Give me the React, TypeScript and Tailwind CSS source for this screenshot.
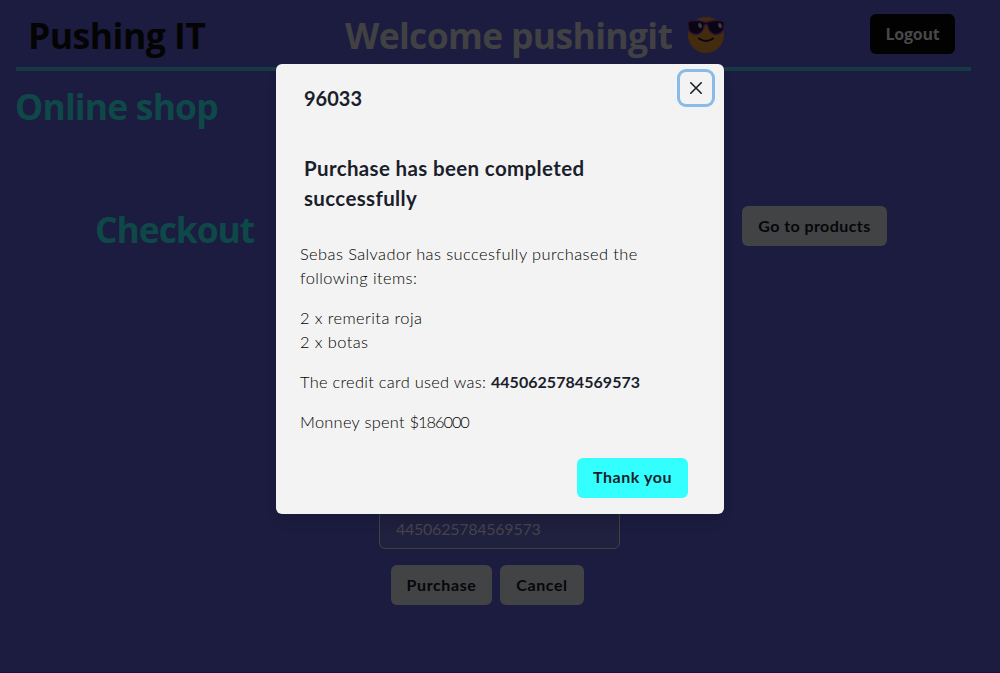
import type { ReactNode } from "react";

const heading = "font-['Open_Sans','Noto_Sans',sans-serif] text-[35.5px] font-bold leading-[54px] whitespace-nowrap";

function DimButton({ children, className }: { children: ReactNode; className: string }) {
  return (
    <button className={`flex h-10 shrink-0 items-center justify-center whitespace-nowrap rounded-md text-base font-bold ${className}`}>
      {children}
    </button>
  );
}

function Sunglasses() {
  return (
    <svg viewBox="0 0 38 38" className="h-[38px] w-[38px]" aria-hidden="true">
      <circle cx="19" cy="19" r="18" fill="#432c0d" />
      <path d="M1 5.5 Q10 3.5 17 6 Q19 7 21 6 Q28 3.5 37 5.5 L37 9 Q37 18 29 18.5 Q22 18 20.5 9 Q19 8 17.5 9 Q16 18 9 18.5 Q1 18 1 9 Z" fill="#0b0412" stroke="#281438" strokeWidth="1.4" />
      <ellipse cx="13" cy="9.5" rx="1.8" ry="2.6" fill="#3d3d40" transform="rotate(-20 13 9.5)" />
      <ellipse cx="33" cy="9.5" rx="1.8" ry="2.6" fill="#3d3d40" transform="rotate(-20 33 9.5)" />
      <path d="M12 22.5 Q19 27.5 26 22.5" fill="none" stroke="#0b0412" strokeWidth="2" strokeLinecap="round" />
    </svg>
  );
}

export default function App() {
  return (
    <div className="relative h-[673px] w-[1000px] overflow-hidden border-b border-[#1c0e3c] bg-[#1c1c40] font-['Lato',sans-serif] text-base text-[#070709]">
      <header className="ml-4 flex h-[71px] w-[955px] items-start border-b-4 border-[#153a46]">
        <div className={`ml-3 mt-2 w-[317px] text-[#040404] ${heading}`}>
          <span className="tracking-[-0.5px]">Pushing IT</span>
        </div>
        <div className={`mt-2 w-[342px] text-[#414143] ${heading}`}>
          <span className="tracking-[-0.67px]">Welcome pushingit</span>
        </div>
        <div className="mt-4 w-[183px]"><Sunglasses /></div>
        <DimButton className="mt-3.5 w-[85px] bg-[#020202] pb-px font-['Open_Sans',sans-serif] tracking-[-0.2px] text-[#484848]">Logout</DimButton>
      </header>
      <main>
        <h1 className={`ml-[15px] mt-2 text-[#0e4848] ${heading}`}><span className="tracking-[-0.85px]">Online shop</span></h1>
        <section className="ml-[95px] mt-[69px] flex h-[55px] w-[792px] items-start justify-between">
          <h2 className={`text-[#0e4848] ${heading}`}><span className="tracking-[-1.1px]">Checkout</span></h2>
          <DimButton className="mt-1 w-[145px] bg-[#414345] tracking-[0.42px]">Go to products</DimButton>
        </section>
        <form className="ml-[379px] mt-[252px] w-[241px]" onSubmit={(e) => e.preventDefault()}>
          <div className="flex h-10 items-center rounded-md border border-[#414141] bg-[#20203f] px-4 text-[#454548]">
            <span className="tracking-[-0.25px]">4450625784569573</span>
          </div>
          <div className="ml-3 mt-4 flex gap-2">
            <DimButton className="w-[101px] bg-[#414345] tracking-[0.6px]">Purchase</DimButton>
            <DimButton className="w-[84px] bg-[#414345] tracking-[0.6px]">Cancel</DimButton>
          </div>
        </form>
      </main>
      <div role="dialog" aria-modal="true" className="absolute left-[276px] top-16 flex h-[450px] w-[448px] flex-col rounded-md bg-[#f3f3f3] text-[#1b1e2b] shadow-[0_10px_15px_-3px_rgba(0,0,0,0.1),0_4px_6px_-2px_rgba(0,0,0,0.05)]">
        <div className="flex h-[89px] items-start justify-between pl-7 pr-3 pt-2">
          <h3 className="mt-[11px] text-xl font-bold leading-[30px]"><span>96033</span></h3>
          <button aria-label="Close" className="flex h-8 w-8 items-center justify-center rounded-md shadow-[0_0_0_3px_#88bce8]">
            <svg viewBox="0 0 12 12" className="h-3 w-3" fill="none" stroke="currentColor" strokeWidth="1.6" strokeLinecap="round">
              <path d="M.8 .8 11.2 11.2M11.2 .8 .8 11.2" />
            </svg>
          </button>
        </div>
        <h4 className="ml-7 text-[20.5px] font-bold leading-[30px] tracking-[0.36px]"><span>Purchase has been completed</span><br /><span>successfully</span></h4>
        <div className="ml-6 mt-[29px] flex flex-col gap-4 whitespace-nowrap text-[16.4px] font-light leading-6 tracking-[0.42px] text-[#000000]">
          <p><span>Sebas Salvador has succesfully purchased the</span><br /><span>following items:</span></p>
          <p><span>2 x remerita roja</span><br /><span>2 x botas</span></p>
          <p><span className="tracking-[0.28px]">The credit card used was: </span><b className="text-base font-bold tracking-[0.05px] text-[#1b1e2b]">4450625784569573</b></p>
          <p><span className="tracking-[0.28px]">Monney spent </span><span className="tracking-[-1.05px]">$186000</span></p>
        </div>
        <div className="mt-6 flex justify-end pr-9">
          <DimButton className="w-[111px] bg-[#33ffff] pb-0.5 tracking-[0.55px]">Thank you</DimButton>
        </div>
      </div>
    </div>
  );
}
